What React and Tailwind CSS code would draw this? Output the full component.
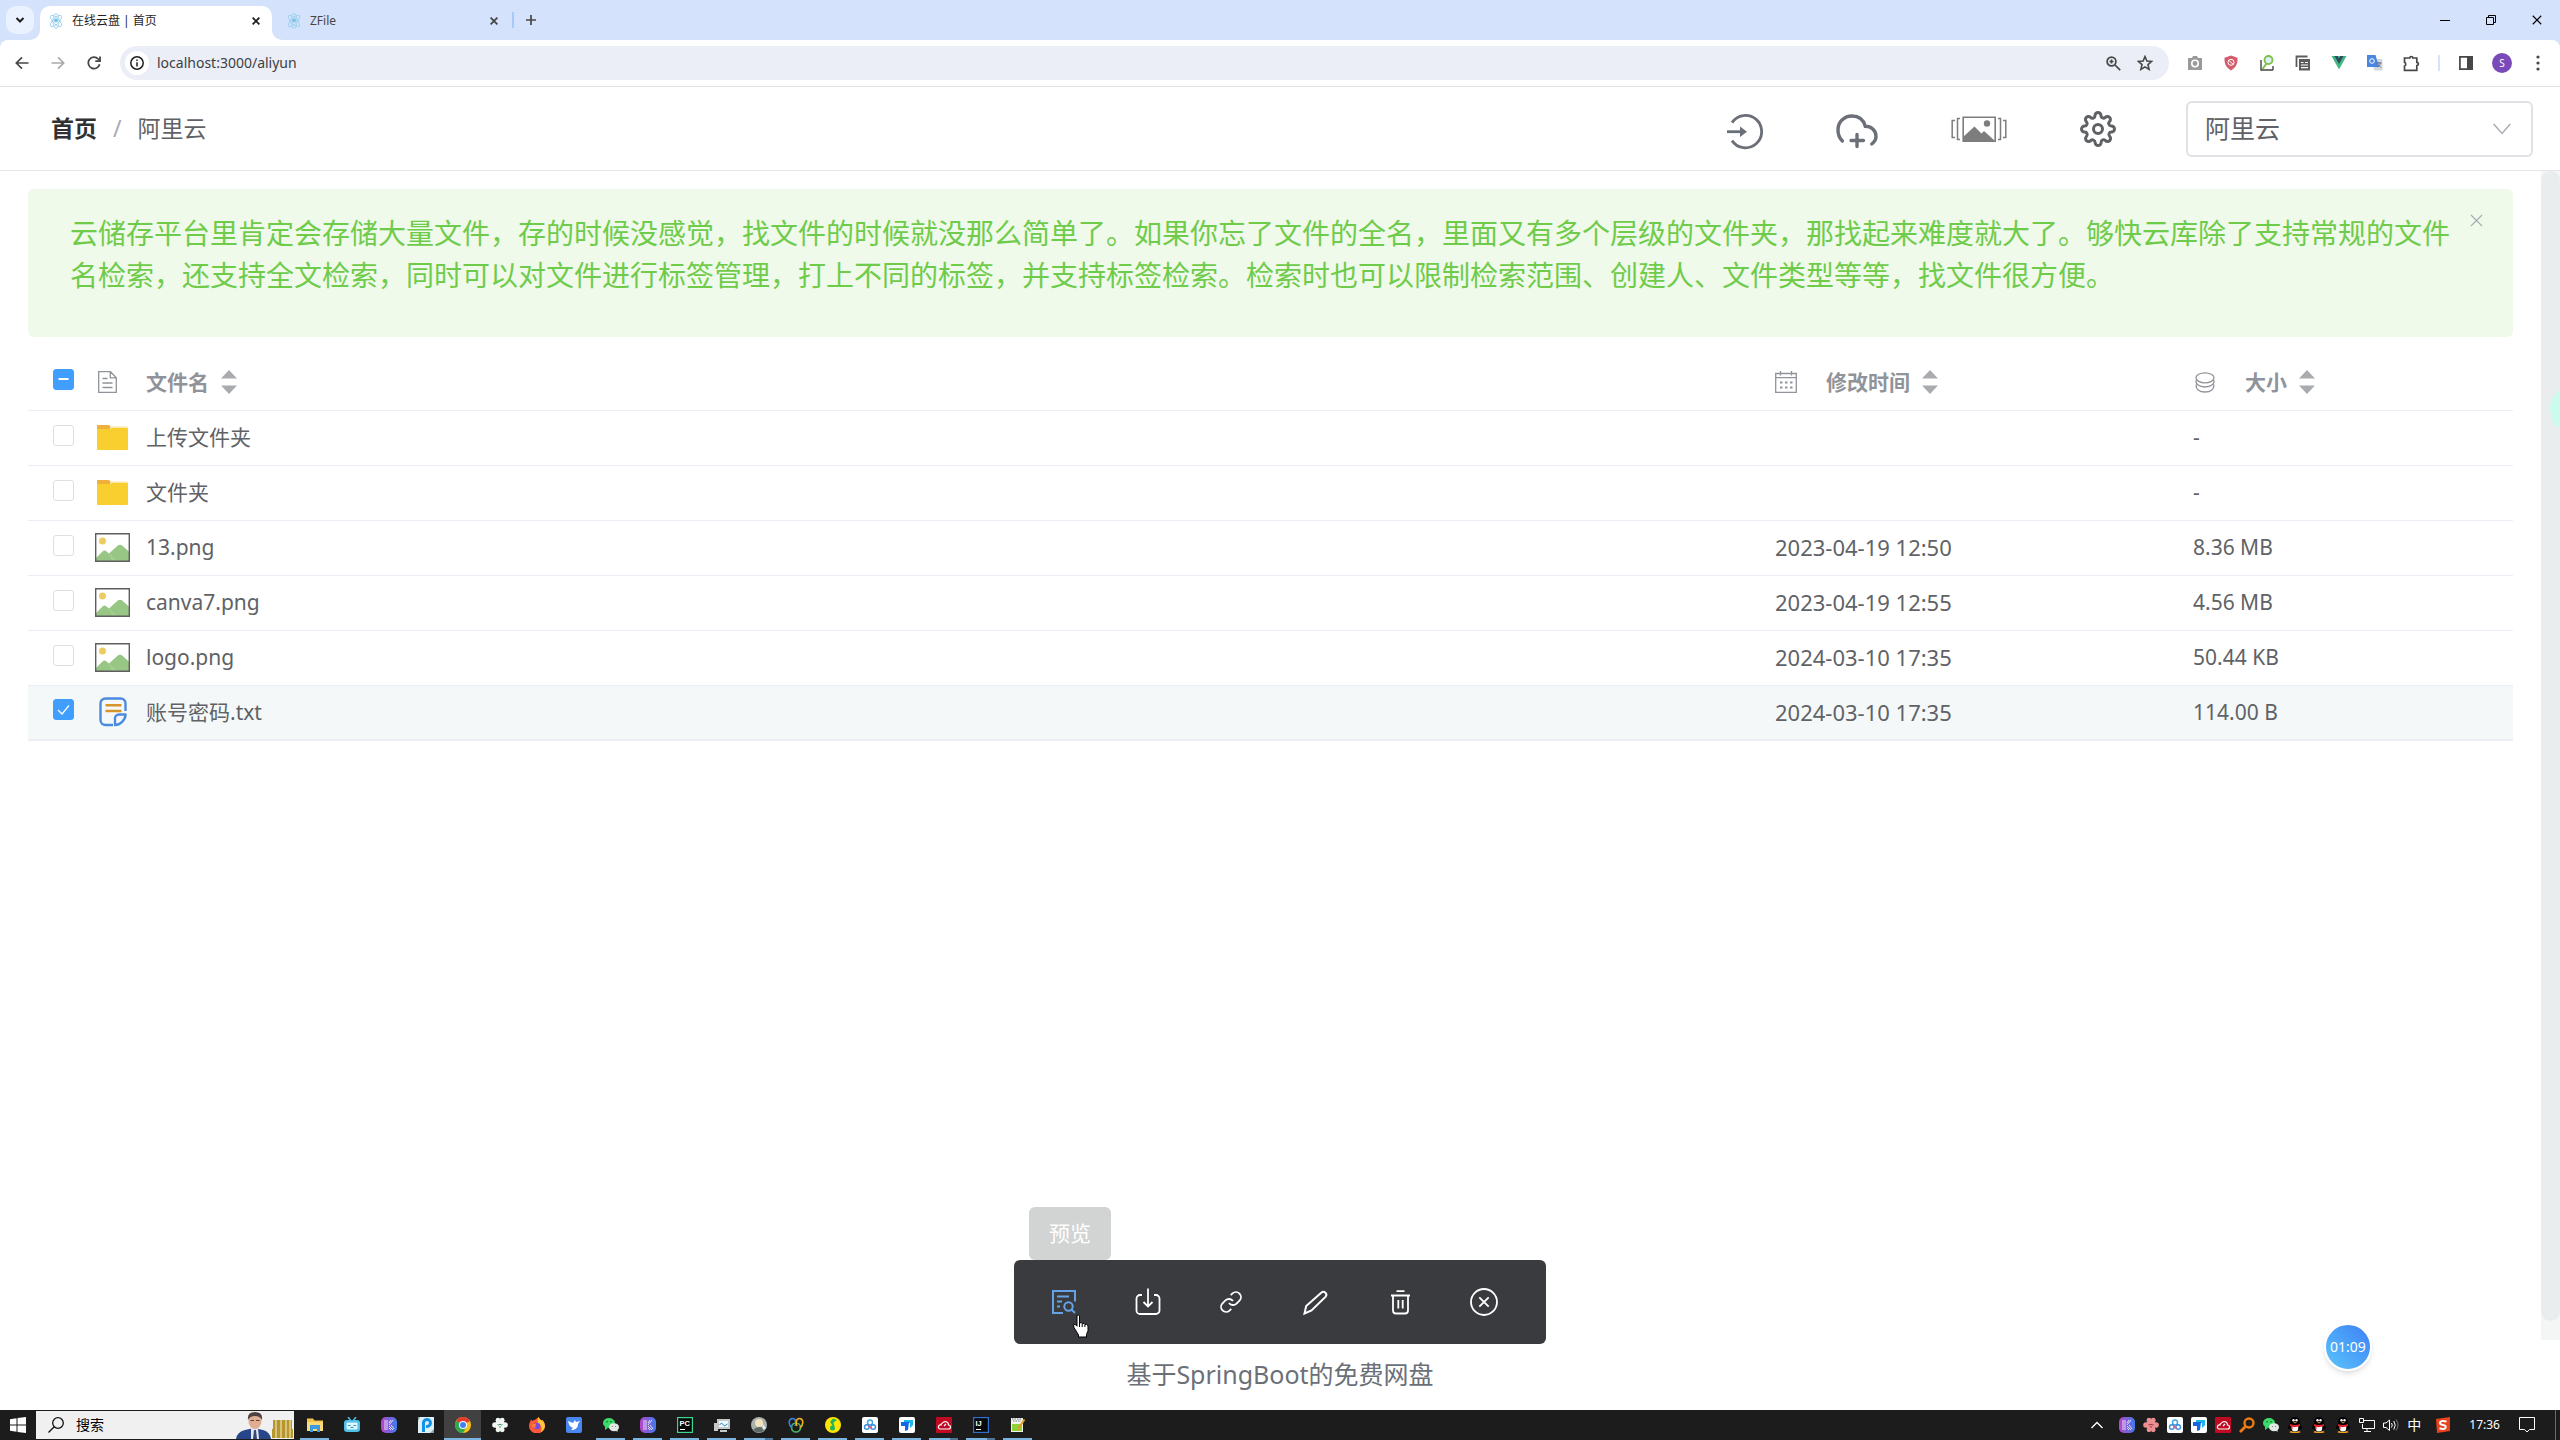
import { useState } from 'react';
import { FiSettings } from 'react-icons/fi';

const ALERT_TEXT =
  '云储存平台里肯定会存储大量文件，存的时候没感觉，找文件的时候就没那么简单了。如果你忘了文件的全名，里面又有多个层级的文件夹，那找起来难度就大了。够快云库除了支持常规的文件名检索，还支持全文检索，同时可以对文件进行标签管理，打上不同的标签，并支持标签检索。检索时也可以限制检索范围、创建人、文件类型等等，找文件很方便。';

const FILES = [
  { name: '上传文件夹', type: 'folder', time: '', size: '-' },
  { name: '文件夹', type: 'folder', time: '', size: '-' },
  { name: '13.png', type: 'image', time: '2023-04-19 12:50', size: '8.36 MB' },
  { name: 'canva7.png', type: 'image', time: '2023-04-19 12:55', size: '4.56 MB' },
  { name: 'logo.png', type: 'image', time: '2024-03-10 17:35', size: '50.44 KB' },
  { name: '账号密码.txt', type: 'text', time: '2024-03-10 17:35', size: '114.00 B' },
];

/* ---------- browser chrome ---------- */

const Favicon = () => (
  <svg width="16" height="16" viewBox="0 0 16 16" fill="none" stroke="#9bd0ee" strokeWidth=".9">
    <ellipse cx="8" cy="8" rx="7.500" ry="3" transform="rotate(45 8 8)" />
    <ellipse cx="8" cy="8" rx="7.500" ry="3" transform="rotate(-45 8 8)" />
    <ellipse cx="8" cy="8" rx="3" ry="7.500" />
    <circle cx="8" cy="7.500" r="2" fill="#7cc0e6" stroke="none" />
  </svg>
);

const CloseIcon = ({ size = 8, width = 1.8 }) => (
  <svg width={size} height={size} viewBox="0 0 8 8" stroke="currentColor" strokeWidth={width}>
    <path d="M.6.6l6.8 6.8M7.4.6L.6 7.4" />
  </svg>
);

const TabStrip = () => (
  <div className="flex h-10 items-end bg-[#d5e2fb] pl-[6px] text-xs text-[#1f1f1f]">
    <button aria-label="搜索标签页" className="mb-[6px] flex h-7 w-7 items-center justify-center rounded-[10px] bg-[#e9f2fe]">
      <svg width="10" height="10" viewBox="0 0 10 10" fill="none" stroke="currentColor" strokeWidth="2">
        <path d="M1.5 3l3.5 3.5L8.500 3" />
      </svg>
    </button>
    <div className="relative ml-[6px] flex h-[34px] w-[232px] items-center rounded-t-[10px] bg-white pl-2 pr-3 pb-1">
      <Favicon />
      <span className="ml-2">在线云盘 | 首页</span>
      <button aria-label="关闭标签页" className="ml-auto"><CloseIcon /></button>
      <svg className="absolute -left-[10px] bottom-0" width="10" height="10"><path d="M10 0v10H0A10 10 0 0 0 10 0z" fill="#fff" /></svg>
      <svg className="absolute -right-[10px] bottom-0" width="10" height="10"><path d="M0 0v10h10A10 10 0 0 1 0 0z" fill="#fff" /></svg>
    </div>
    <div className="flex h-[34px] w-[240px] items-center pl-[14px] pr-[14px] pb-1 text-[#454746]">
      <Favicon />
      <span className="ml-2">ZFile</span>
      <button aria-label="关闭标签页" className="ml-auto"><CloseIcon /></button>
    </div>
    <div className="mb-3 h-4 w-[2px] bg-[#a8c7fa]" />
    <button aria-label="新标签页" className="mb-[15px] ml-3 text-[#454746]">
      <svg width="10" height="10" viewBox="0 0 10 10" stroke="currentColor" strokeWidth="1.7"><path d="M5 0v10M0 5h10" /></svg>
    </button>
    <div className="mb-[15px] ml-auto flex items-center gap-9 pr-[18px] text-black">
      <button aria-label="最小化"><svg width="10" height="10" stroke="currentColor"><path d="M0 5.500h10" /></svg></button>
      <button aria-label="还原">
        <svg width="10" height="10" fill="none" stroke="currentColor"><path d="M.5 2.500h7v7h-7zM2.500 2.500v-2h7v7h-2" /></svg>
      </button>
      <button aria-label="关闭"><CloseIcon size={10} width={0.9} /></button>
    </div>
  </div>
);

const Toolbar = () => (
  <div className="bg-[#d5e2fb]">
    <div className="flex h-[47px] items-center rounded-t-lg border-b border-[#e0e2e6] bg-white pl-[15px] pr-[20px] text-[#474747]">
      <button aria-label="后退">
        <svg width="14" height="14" viewBox="0 0 14 14" fill="none" stroke="currentColor" strokeWidth="1.7"><path d="M13.500 7H1.500M7 1.300L1.300 7 7 12.700" /></svg>
      </button>
      <button aria-label="前进" className="ml-[22px] text-[#ababab]">
        <svg width="14" height="14" viewBox="0 0 14 14" fill="none" stroke="currentColor" strokeWidth="1.7"><path d="M.5 7h12M7 1.300L12.700 7 7 12.700" /></svg>
      </button>
      <button aria-label="重新加载" className="ml-[22px]">
        <svg width="14" height="14" viewBox="0 0 14 14" fill="none" stroke="currentColor" strokeWidth="1.800">
          <path d="M12.600 8.200A5.700 5.700 0 1 1 11.200 3L12.800 4.700" /><path d="M13 .5v4.700H8.300" />
        </svg>
      </button>
      <div className="ml-[19px] flex h-[34px] flex-1 items-center rounded-full bg-[#ebeef7] pl-[5px] pr-4">
        <button aria-label="网站信息" className="flex h-6 w-6 items-center justify-center rounded-full bg-white text-[#1f1f1f]">
          <svg width="14" height="14" viewBox="0 0 14 14" fill="none" stroke="currentColor" strokeWidth="1.500">
            <circle cx="7" cy="7" r="6.200" /><path d="M7 6.200v4.200M7 3.400v1.600" />
          </svg>
        </button>
        <input aria-label="地址" defaultValue="localhost:3000/aliyun" className="ml-2 flex-1 bg-transparent text-sm text-[#3c4043] outline-none" />
        <svg width="15" height="15" viewBox="0 0 15 15" fill="none" stroke="currentColor" strokeWidth="1.700">
          <circle cx="5.500" cy="5.500" r="4.400" /><path d="M9 9l5.200 5.200M5.500 3.500v4M3.500 5.500h4" />
        </svg>
        <svg className="ml-4" width="16" height="16" viewBox="0 0 16 16" fill="none" stroke="currentColor" strokeWidth="1.600">
          <path d="M8 1.500l1.900 4.500 4.800.4-3.700 3.200 1.100 4.800L8 11.900l-4.100 2.500L5 9.600 1.300 6.400l4.800-.4z" />
        </svg>
      </div>
      <div className="ml-[18px] flex items-center gap-5">
        <svg width="16" height="16" viewBox="0 0 16 16">
          <path d="M1 3h4l1-2h4l1 2h4v12H1z" fill="#9a9a9a" /><circle cx="8" cy="8.500" r="3.200" fill="none" stroke="#fff" strokeWidth="1.600" />
        </svg>
        <svg width="16" height="16" viewBox="0 0 16 16">
          <path d="M8 .5l6.500 2.300c.3 6-1.500 9.700-6.500 12.700C3 12.500 1.200 8.800 1.500 2.800z" fill="#d45d6d" />
          <circle cx="8" cy="7.300" r="3" fill="none" stroke="#fff" /><path d="M6 5.300l4 4" stroke="#fff" />
        </svg>
        <svg width="16" height="16" viewBox="0 0 16 16" fill="none">
          <path d="M2 5v10h12M14 11v4" stroke="#444" strokeWidth="1.400" />
          <circle cx="9.500" cy="5" r="4" fill="#dff0f4" stroke="#7cc04b" strokeWidth="1.800" /><path d="M7.500 8.500L3.500 14" stroke="#7cc04b" strokeWidth="2" />
        </svg>
        <svg width="16" height="16" viewBox="0 0 16 16">
          <path d="M1.500 12V1.500h11" fill="none" stroke="#5c5c5c" strokeWidth="1.800" /><path d="M4 4h11v11.500H4z" fill="#5c5c5c" />
          <path d="M6 7.500h2.500M10 7.500h3M6 10h7M6 12.700h7" stroke="#fff" strokeWidth="1.200" />
        </svg>
        <svg width="16" height="16" viewBox="0 0 16 16"><path d="M.5 1h15L8 14.500z" fill="#41b883" /><path d="M3.500 1h3L8 3.500 9.500 1h3L8 9z" fill="#2f495e" /></svg>
        <svg width="16" height="16" viewBox="0 0 16 16">
          <path d="M5 4h10.500v11.500H7z" fill="#d6d8dc" /><path d="M0 0h8.500l3.500 12H0z" fill="#4a86e0" />
          <circle cx="5" cy="6" r="2.300" fill="none" stroke="#fff" /><path d="M9.500 8h5M12 7v1M13.500 8c-.5 2-2 3.500-3 4M11 9.500l3 3" stroke="#5b6b88" fill="none" />
        </svg>
        <svg width="17" height="17" viewBox="0 0 17 17" fill="none" stroke="currentColor" strokeWidth="1.700">
          <path d="M1.500 3h5.300a1.500 1.500 0 0 1 3 0h4v4.300a1.600 1.600 0 0 1 0 3.200v4.800H1.500v-4.300a2 2 0 0 0 0-3.700z" />
        </svg>
      </div>
      <div className="ml-[18px] h-4 w-[2px] bg-[#d3e3fd]" />
      <svg className="ml-[19px]" width="14" height="14" viewBox="0 0 14 14"><path d="M.9.9h12.200v12.200H.9z" fill="none" stroke="#474747" strokeWidth="1.700" /><path d="M8 0h6v14H8z" fill="#474747" /></svg>
      <div className="ml-[19px] flex h-5 w-5 items-center justify-center rounded-full bg-[#7a4ab8] text-[10px] text-white">S</div>
      <button aria-label="菜单" className="ml-6">
        <svg width="4" height="16" viewBox="0 0 4 16" fill="currentColor"><circle cx="2" cy="2" r="1.600" /><circle cx="2" cy="8" r="1.600" /><circle cx="2" cy="14" r="1.600" /></svg>
      </button>
    </div>
  </div>
);

/* ---------- page header ---------- */

const LoginIcon = () => (
  <svg width="36" height="42" viewBox="0 0 36 42" fill="none" stroke="#6b6f77">
    <path d="M5 14.600A16.200 16.200 0 1 1 5 32.600" strokeWidth="2.800" />
    <path d="M0 23.700h14" strokeWidth="2.800" />
    <path d="M13 18.500l7 5.200-7 5.200z" fill="#6b6f77" stroke="none" />
  </svg>
);

const CloudIcon = () => (
  <svg width="42" height="42" viewBox="0 0 42 42" fill="none" stroke="#6b6f77" strokeWidth="3.400" strokeLinecap="round">
    <path d="M6.400 33A15.200 15.200 0 0 1 2 22C2 13.500 8.500 8 16 8c6.500 0 11.500 3.800 13.300 10.200C35 18.300 40 22 40 28.500c0 3-1.500 5.500-4.200 7.500" />
    <path d="M21 26.500v12M15 32.500h12.500" />
  </svg>
);

const GalleryIcon = () => (
  <svg width="56" height="30" viewBox="0 0 56 30" fill="none" stroke="#7d7d7d">
    <path d="M12.200 3.200h32v24h-32z" strokeWidth="1.600" />
    <path d="M12 28v-5l11.500-10.500 7 7 2.500-2.500 11 10v1z" fill="#7d7d7d" stroke="none" />
    <circle cx="36" cy="9.500" r="3.200" fill="#7d7d7d" stroke="none" />
    <path d="M9 4.500H6.500v21H9M47 4.500h2.500v21H47M4 6.500H1.200v17H4M52 6.500h2.800v17H52" strokeWidth="1.500" />
  </svg>
);

const PageHeader = () => (
  <header className="flex h-[84px] items-center border-b border-[#e3e5e6] bg-white pl-[51px] pr-[27px]">
    <nav className="flex items-center text-[23px] text-[#606266]">
      <a href="#home" className="font-bold text-[#303133]">首页</a>
      <span className="mx-4 text-[#a8abb2]">/</span>
      <a href="#aliyun">阿里云</a>
    </nav>
    <div className="ml-auto flex items-center gap-[73px]">
      <button aria-label="登录"><LoginIcon /></button>
      <button aria-label="上传"><CloudIcon /></button>
      <button aria-label="图库"><GalleryIcon /></button>
      <button aria-label="设置"><FiSettings size={36} strokeWidth={2} className="text-[#5f6264]" /></button>
    </div>
    <div className="relative ml-[70px] w-[347px]">
      <select aria-label="存储源" className="h-14 w-full appearance-none rounded-md border-2 border-[#dfe1e5] bg-white pl-[17px] text-[25px] text-[#606266]">
        <option>阿里云</option>
      </select>
      <svg className="pointer-events-none absolute right-[22px] top-[22px]" width="18" height="12" viewBox="0 0 18 12" fill="none" stroke="#a8abb2" strokeWidth="1.400">
        <path d="M.7 1L9 10.500 17.300 1" />
      </svg>
    </div>
  </header>
);

/* ---------- file list ---------- */

const Checkbox = ({ label, checked, partial, onChange }) => (
  <label className="relative block h-[21px] w-[21px]">
    <input
      type="checkbox"
      aria-label={label}
      checked={checked}
      onChange={onChange}
      className={`block h-[21px] w-[21px] appearance-none rounded-[3px] border ${checked || partial ? 'border-[#409eff] bg-[#409eff]' : 'border-[#dcdfe6] bg-white'}`}
    />
    <svg className="pointer-events-none absolute inset-0" width="21" height="21" fill="none" stroke="#fff">
      {partial && <path d="M5.500 10h10" strokeWidth="2" />}
      {checked && !partial && <path d="M5 11l4 4 7-8.500" strokeWidth="1.200" />}
    </svg>
  </label>
);

const FileIcon = ({ type }) => {
  if (type === 'folder') {
    return (
      <svg width="31" height="25" viewBox="0 0 31 25">
        <path d="M0 0h12l2 2v6H0z" fill="#f0b03c" />
        <path d="M13 1.500h17.500V5H13z" fill="#fbe6a6" />
        <path d="M0 4h13l2-1h16v21a1 1 0 0 1-1 1H1a1 1 0 0 1-1-1z" fill="#f8cf2e" />
      </svg>
    );
  }
  if (type === 'image') {
    return (
      <svg width="35" height="29" viewBox="0 0 35 29">
        <path d="M.7.7h33.600v27.600H.7z" fill="#fff" />
        <circle cx="7.500" cy="8" r="3.500" fill="#ebcb62" />
        <path d="M1 25l6.500-6.500q2-1.800 4 0L14 20.500l8.500-7.700q2.500-2 5 0L34.300 19v9H1z" fill="#97c685" />
        <path d="M13.500 21l8 7M16 25l3 3" stroke="#b5d8a8" strokeWidth=".8" />
        <path d="M.7.7h33.600v27.600H.7z" fill="none" stroke="#5f5f5f" strokeWidth="1.400" />
      </svg>
    );
  }
  return (
    <svg width="28" height="30" viewBox="0 0 28 30" fill="none" stroke="#4a8be0" strokeWidth="2.400">
      <path d="M14 28H6.500a5 5 0 0 1-5-5V6.500a5 5 0 0 1 5-5h15a5 5 0 0 1 5 5V14" />
      <path d="M26.500 17.500h-6.500a4 4 0 0 0-4 4V28c5 0 10.500-5 10.500-10.500z" strokeLinejoin="round" />
      <path d="M6.500 8.200h16M6.500 14h16" stroke="#d69429" strokeWidth="2.600" />
    </svg>
  );
};

const SortCaret = () => (
  <svg className="ml-3" width="16" height="24" viewBox="0 0 16 24" fill="#a9abae">
    <path d="M8 0l8 8.500H0zM8 24l8-8.500H0z" />
  </svg>
);

const DocIcon = () => (
  <svg width="19" height="22" viewBox="0 0 19 22" fill="none" stroke="#909399" strokeWidth="1.300">
    <path d="M.7.7h11.800l5.800 6v14.600H.7zM12.300.7v6.200h6M4.500 7.500h5M4.500 12h10M4.500 16.500h10" />
  </svg>
);

const CalendarIcon = () => (
  <svg width="22" height="22" viewBox="0 0 22 22" fill="none" stroke="#909399" strokeWidth="1.300">
    <path d="M.7 2.500h20.600v18.800H.7zM.7 6.700h20.600M5.500 0v4.500M16.500 0v4.500" />
    <path d="M5 11.500h12.500M5 16.500h12.500" strokeWidth="1.800" strokeDasharray="2.500 2.500" />
  </svg>
);

const CoinsIcon = () => (
  <svg width="20" height="21" viewBox="0 0 20 21" fill="none" stroke="#909399" strokeWidth="1.300">
    <ellipse cx="10" cy="5.800" rx="9" ry="5" />
    <path d="M1.500 8C-.5 11.500 4 15 10 15s10.500-3.500 8.500-7M1.500 12.500c-1.500 4.500 3 7.500 8.500 7.500s10-3 8.500-7.500" />
  </svg>
);

const FileTable = () => {
  const [selected, setSelected] = useState(['账号密码.txt']);
  const toggle = (name) =>
    setSelected((s) => (s.includes(name) ? s.filter((n) => n !== name) : [...s, name]));
  const all = selected.length === FILES.length;

  return (
    <table className="mt-[18px] w-full table-fixed border-collapse text-left text-[21px] text-[#606266]">
      <thead className="text-[#909399]">
        <tr className="h-[55px] border-b border-[#ebeef5]">
          <th className="w-[67px] pb-[5px] pl-[25px]">
            <Checkbox label="全选" checked={all} partial={selected.length > 0 && !all} onChange={() => setSelected(all ? [] : FILES.map((f) => f.name))} />
          </th>
          <th>
            <div className="flex items-center">
              <span className="mr-4 w-[35px] pl-[3px]"><DocIcon /></span>文件名<SortCaret />
            </div>
          </th>
          <th className="w-[418px]">
            <div className="flex items-center"><span className="mr-[29px]"><CalendarIcon /></span>修改时间<SortCaret /></div>
          </th>
          <th className="w-[320px]">
            <div className="flex items-center"><span className="ml-[2px] mr-[30px]"><CoinsIcon /></span>大小<SortCaret /></div>
          </th>
        </tr>
      </thead>
      <tbody>
        {FILES.map((f) => (
          <tr key={f.name} className={`h-[55px] border-b border-[#ebeef5] last:border-b-2 ${selected.includes(f.name) ? 'bg-[#f4f8f9]' : ''}`}>
            <td className="pb-[5px] pl-[25px]"><Checkbox label={f.name} checked={selected.includes(f.name)} onChange={() => toggle(f.name)} /></td>
            <td>
              <div className="flex items-center">
                <span className="mr-4 flex w-[35px] justify-center"><FileIcon type={f.type} /></span>{f.name}
              </div>
            </td>
            <td className="text-[22px]">{f.time}</td>
            <td>{f.size}</td>
          </tr>
        ))}
      </tbody>
    </table>
  );
};

/* ---------- floating action bar ---------- */

const ACTIONS = [
  {
    label: '预览',
    icon: (
      <g stroke="#66a3e6" strokeWidth="2">
        <path d="M13 25H3V3h22v10.500M7 8.500h12M7 13.500h5M7 18.500h3" /><circle cx="18.500" cy="18.500" r="4.200" /><path d="M21.500 21.500l3.500 3.500" />
      </g>
    ),
  },
  { label: '下载', icon: <path d="M8 7H6a3.500 3.500 0 0 0-3.500 3.500v12A3.500 3.500 0 0 0 6 26h16a3.500 3.500 0 0 0 3.500-3.500v-12A3.500 3.500 0 0 0 22 7h-2M14 .5V18M9.500 14l4.500 4.500 4.500-4.500" /> },
  {
    label: '复制链接',
    icon: (
      <g transform="translate(1 2)">
        <path d="M10 13a5 5 0 0 0 7.540.54l3-3a5 5 0 0 0-7.070-7.070l-1.720 1.710" />
        <path d="M14 11a5 5 0 0 0-7.540-.54l-3 3a5 5 0 0 0 7.070 7.070l1.710-1.710" />
      </g>
    ),
  },
  { label: '重命名', icon: <path d="M2.500 25.500l1.700-7.500L19.500 4.500a3 3 0 0 1 4.200 4.200L9.500 22.500z" strokeWidth="2" /> },
  { label: '删除', icon: <path d="M10.500 3.200h8M5 7.500h19M7 7.500v15a3 3 0 0 0 3 3h9a3 3 0 0 0 3-3v-15M12.300 12v8.500M16.700 12v8.500" /> },
  { label: '取消', icon: <><circle cx="14" cy="14" r="13" /><path d="M9.300 9.300l9.400 9.400M18.700 9.300l-9.400 9.400" /></> },
];

const ActionBar = () => (
  <div className="absolute bottom-[66px] left-1/2 flex h-[84px] w-[532px] -translate-x-1/2 items-center rounded-md bg-[#3a3b3f] pl-2 pr-5">
    <div role="tooltip" className="absolute bottom-full left-[15px] flex h-[53px] items-center rounded-md bg-[#d2d3d3] px-5 text-[21px] text-white">预览</div>
    {ACTIONS.map(({ label, icon }) => (
      <button key={label} aria-label={label} className="flex flex-1 justify-center">
        <svg width="28" height="28" viewBox="0 0 28 28" fill="none" stroke="#fff" strokeWidth="1.800">{icon}</svg>
      </button>
    ))}
    {/* hand cursor */}
    <svg className="absolute left-[58px] top-[54px]" width="18" height="24" viewBox="0 0 18 24">
      <path d="M5 1.500q1.300-1 2.500.2V9l1.800-.3.900.9 1.700-.2 1 1 1.600-.1 1.500 1.600v5l-1.500 3.500V23H6.500v-2L2 13.500l-.5-2.500 1.500-.8 2 2z" fill="#fff" stroke="#000" />
      <path d="M7.500 9v4M10.200 9.800V13M12.900 10.500V13" stroke="#000" />
    </svg>
  </div>
);

/* ---------- taskbar ---------- */

const SmallIcon = ({ children }) => <svg width="16" height="16" viewBox="0 0 16 16" fill="none">{children}</svg>;

const KIcon = () => (
  <SmallIcon>
    <defs><linearGradient id="kgrad" x1="0" y1="0" x2="1" y2="0"><stop stopColor="#b845cc" /><stop offset="1" stopColor="#3f7bea" /></linearGradient></defs>
    <rect width="16" height="16" rx="5" fill="url(#kgrad)" />
    <path d="M4 3v10M6 3v10M8 9l4 4M8 11l2 2M8 8l4-5M8 6l2-3M10 8l3 4" stroke="#fff" strokeWidth=".8" />
  </SmallIcon>
);
const WechatIcon = () => (
  <SmallIcon>
    <ellipse cx="6" cy="6" rx="6" ry="5" fill="#3ddb6a" /><path d="M2 9v4l3-2z" fill="#3ddb6a" />
    <circle cx="4" cy="4.800" r=".8" fill="#155a2a" /><circle cx="8" cy="4.800" r=".8" fill="#155a2a" />
    <ellipse cx="11" cy="10.200" rx="5" ry="4" fill="#e4e8e5" /><path d="M12 13l2.500 2V12z" fill="#e4e8e5" />
    <circle cx="9.500" cy="9.500" r=".6" fill="#777" /><circle cx="12.500" cy="9.500" r=".6" fill="#777" />
  </SmallIcon>
);
const NetdiskIcon = () => (
  <SmallIcon>
    <rect width="16" height="16" rx="2" fill="#fff" />
    <circle cx="8" cy="5.500" r="2.500" stroke="#3aa5e8" strokeWidth="1.400" /><circle cx="4.800" cy="10" r="2.300" stroke="#3a8fe0" strokeWidth="1.400" /><circle cx="11.200" cy="10" r="2.300" stroke="#3a8fe0" strokeWidth="1.400" />
    <path d="M6.500 8.500l3 3" stroke="#e8566d" strokeWidth="1.600" />
  </SmallIcon>
);
const TodeskIcon = () => (
  <SmallIcon><rect width="16" height="16" rx="2" fill="#fff" /><path d="M5 3h9v5l-3 3V6H5z" fill="#19b8e8" /><path d="M2 5h8l-1 8-3 1V9H2z" fill="#1267e8" /></SmallIcon>
);
const RedCloudIcon = () => (
  <SmallIcon><rect width="16" height="16" rx="1" fill="#c00a22" /><path d="M4 12h8.500a2 2 0 0 0 0-4 3.300 3.300 0 0 0-6-2A2 2 0 0 0 5 8a2 2 0 0 0-1 4zM8 9l2-2" stroke="#fff" strokeWidth="1.200" /></SmallIcon>
);
const PenguinIcon = () => (
  <SmallIcon>
    <ellipse cx="8" cy="15" rx="5.500" ry="1" fill="#f5a623" />
    <path d="M8 0c3.500 0 4.800 2.500 4.800 5.500L15 11l-1 1.500L12.500 11Q12 15 8 15t-4.500-4L2 12.500 1 11l2.200-5.500C3.200 2.500 4.500 0 8 0z" fill="#000" />
    <path d="M4.800 9h6.400q.8 5.500-3.200 5.500T4.800 9z" fill="#fff" />
    <circle cx="6.500" cy="3.200" r="1.200" fill="#fff" /><circle cx="9.500" cy="3.200" r="1.200" fill="#fff" />
    <path d="M6 5.200h4l-2 1.300z" fill="#f5a623" />
    <path d="M3 7q5 2 10 0v2q-5 1.800-7.500.8v2.500H4V9.300L3 9z" fill="#e0212c" />
  </SmallIcon>
);
const FlowerIcon = ({ color, center }) => (
  <SmallIcon>
    <g fill={color}><circle cx="6" cy="3.200" r="2.400" /><circle cx="10.200" cy="3.200" r="2.400" /><circle cx="6" cy="12.800" r="2.400" /><circle cx="10.200" cy="12.800" r="2.400" /><circle cx="3" cy="8" r="2.800" /><circle cx="13" cy="8" r="2.800" /><circle cx="8" cy="8" r="5" /></g>
    <path d="M5.500 7q1 2.500 2.500 0 1.500 2.500 2.500 0M8 9v2" stroke={center} strokeWidth=".9" />
  </SmallIcon>
);
const IdeIcon = ({ text, border }) => (
  <SmallIcon>
    <rect x=".6" y=".6" width="14.800" height="14.800" fill="#080808" stroke={border} strokeWidth="1.200" />
    <text x="2.500" y="8.800" fontSize="7.500" fontWeight="bold" fill="#fff" fontFamily="Liberation Sans, sans-serif">{text}</text>
    <path d="M3 12.500h5" stroke="#fff" />
  </SmallIcon>
);

const APPS = [
  { name: '文件资源管理器', open: true, icon: <SmallIcon><path d="M0 1.500h6l1.500 2H16V14H0z" fill="#f6c445" /><path d="M0 5h16v9H0z" fill="#fbd978" /><path d="M3 8h10v7h-3v-3H6v3H3z" fill="#3c9bdc" /></SmallIcon> },
  { name: '哔哩哔哩', icon: <SmallIcon><path d="M4 0l2.500 3M12 0L9.500 3" stroke="#4fc0e8" strokeWidth="1.500" /><rect y="3" width="16" height="12" rx="3" fill="#4fc0e8" /><rect x="2.500" y="5.500" width="11" height="7" rx="1" fill="#dff5fc" /><path d="M4 8.500h2.500M9.500 8.500H12M6.500 10.500h3" stroke="#2796c4" /></SmallIcon> },
  { name: 'K', icon: <KIcon /> },
  { name: 'P', icon: <SmallIcon><rect width="16" height="16" fill="#8ca0a4" /><path d="M2 0h14v12l-4 4H0V4z" fill="#dff1f8" /><path d="M5.500 15V5.500a3.500 3.500 0 1 1 3.500 4H8" stroke="#1192e8" strokeWidth="3" /></SmallIcon> },
  {
    name: 'Chrome', open: true, active: true,
    icon: <SmallIcon><circle cx="8" cy="8" r="8" fill="#fbc116" /><path d="M8 8L1.070 4A8 8 0 0 1 14.930 4z" fill="#e33b2e" /><path d="M8 8L1.070 4A8 8 0 0 0 8 16l3.500-6z" fill="#2da94f" /><circle cx="8" cy="8" r="4" fill="#fff" /><circle cx="8" cy="8" r="3" fill="#3f82f1" /></SmallIcon>,
  },
  { name: '花', icon: <FlowerIcon color="#f2f7f4" center="#2f8c5c" /> },
  {
    name: 'Firefox',
    icon: <SmallIcon><path d="M1 5l1-2.500L3.500 4Q5 2.500 6.500 2.500L9.500 0q1 2.500 3 3.500L13.500 3Q16 6 16 9a8 7.500 0 0 1-16 0q0-2.500 1-4z" fill="#ff5a36" /><path d="M9.500 0q1 2.500 3 3.500L13.500 3Q16 6 16 9q-.5 4-4 6 2-6-3-9-1-3 .5-6z" fill="#ffc83a" /><circle cx="8" cy="9" r="3.300" fill="#7a4be0" /><path d="M3 8q2-2 4.500-1-2 1.500-.5 3.500-3 .5-4-2.500z" fill="#ff8a2b" /></SmallIcon>,
  },
  { name: '飞鸟', icon: <SmallIcon><rect width="16" height="16" rx="2" fill="#4a86f0" /><path d="M2 4l5 2 2-3 1 2 4-1-2 3c0 4-3 6-7 6l2-2C4 10 3 8 2 4z" fill="#fff" /></SmallIcon> },
  { name: '微信', open: true, icon: <WechatIcon /> },
  { name: 'K2', open: true, icon: <KIcon /> },
  { name: 'PyCharm', open: true, icon: <IdeIcon text="PC" border="#3ed693" /> },
  { name: '监视器', open: true, icon: <SmallIcon><path d="M0 6h4v8H0z" fill="#c9c9c9" /><path d="M3 2h13v10H3zM6 13h7v2H6z" fill="#c3c8c8" /><path d="M5 4h9v6H5z" fill="#e9fbff" /><path d="M5.500 8l2-2 3 3 3-2" stroke="#2a7fb0" /></SmallIcon> },
  { name: '头像', open: true, multi: true, icon: <SmallIcon><circle cx="8" cy="8" r="8" fill="#a9b0ae" /><circle cx="8" cy="6" r="4" fill="#f2e2bc" /><path d="M2 13q6-6 12 0-6 5-12 0z" fill="#5e6a66" /><path d="M11 6l4 5-3 2z" fill="#eceff0" /></SmallIcon> },
  { name: 'Navicat', open: true, icon: <SmallIcon><circle cx="8" cy="10.500" r="4.500" stroke="#47b86b" strokeWidth="1.600" /><path d="M4 11C-.5 7 1 1.500 4.500 1.500S8.500 6 7 9" stroke="#3d7fe8" strokeWidth="1.600" /><path d="M12 11c4.500-4 3-9.500-.5-9.500S7.500 6 9 9" stroke="#f2b01e" strokeWidth="1.600" /></SmallIcon> },
  { name: 'QQ音乐', open: true, icon: <SmallIcon><circle cx="8" cy="8" r="8" fill="#ffe600" /><path d="M8 1.500l4 1.500-3.500 2.500L10 11a2.500 2.500 0 1 1-2.500-2.500L5 5z" fill="#1fb562" /></SmallIcon> },
  { name: '百度网盘', open: true, icon: <NetdiskIcon /> },
  { name: 'ToDesk', open: true, icon: <TodeskIcon /> },
  { name: '红云', open: true, multi: true, icon: <RedCloudIcon /> },
  { name: 'IntelliJ IDEA', open: true, multi: true, icon: <IdeIcon text="IJ" border="#2e6fd0" /> },
  { name: 'Notepad++', open: true, icon: <SmallIcon><path d="M1 1h12v14H1z" fill="#f3f3ee" /><path d="M2 7h10v7H2z" fill="#8fd13a" /><path d="M2 2h10M3 4h8" stroke="#777" strokeDasharray="1.500 1" /><path d="M14.500 2.500L9 10.500 8 13" stroke="#e0a020" strokeWidth="2" /></SmallIcon> },
];

const TRAY = [
  <KIcon key="k" />,
  <FlowerIcon key="flower" color="#eb8f92" center="#8c2f38" />,
  <NetdiskIcon key="netdisk" />,
  <TodeskIcon key="todesk" />,
  <RedCloudIcon key="red" />,
  <SmallIcon key="search"><circle cx="10" cy="6" r="4.500" stroke="#ee7a12" strokeWidth="2.400" /><path d="M6.500 9.500L1 15" stroke="#ee7a12" strokeWidth="2.800" /></SmallIcon>,
  <WechatIcon key="wechat" />,
  <PenguinIcon key="qq1" />,
  <PenguinIcon key="qq2" />,
  <PenguinIcon key="qq3" />,
  <SmallIcon key="network"><path d="M5 3.500h10.500v8H3.500V7M8 12v2.500M5 14.500h7M.5 1.500h4v4h-4z" stroke="#fff" /></SmallIcon>,
  <SmallIcon key="volume"><path d="M.5 6v4.500H3l3.500 3V3L3 6z" stroke="#fff" /><path d="M8.500 6q1.500 2.200 0 4.500M10.800 4q2.800 4.200 0 8.500" stroke="#fff" /><path d="M13 2.500q4 5.700 0 11" stroke="#777" /></SmallIcon>,
];

const Taskbar = () => (
  <footer className="flex h-[30px] items-center bg-[#1c1c1c] text-white">
    <button aria-label="开始" className="flex w-9 justify-center">
      <svg width="16" height="16" viewBox="0 0 16 16" fill="#fff"><path d="M0 2.200L6.500 1.300v6.200H0zM7.500 1.100L16 0v7.500H7.500zM0 8.500h6.500v6.200L0 13.800zM7.500 8.500H16V16l-8.500-1.100z" /></svg>
    </button>
    <label className="relative flex h-7 w-[258px] items-center bg-[#f0f0f0] pl-3 text-black">
      <svg width="16" height="16" viewBox="0 0 16 16" fill="none" stroke="#111" strokeWidth="1.300"><circle cx="10" cy="6" r="5.300" /><path d="M6.200 9.800L.5 15.500" /></svg>
      <input aria-label="搜索" placeholder="搜索" className="ml-3 w-24 bg-transparent text-sm outline-none placeholder:text-black" />
      <svg className="ml-auto" width="58" height="28" viewBox="0 0 58 28">
        <path d="M0 28q1-7 9-9l9-2 9 2q7 2 8 9z" fill="#27468a" /><path d="M15 17h7l1 11h-8z" fill="#e3e9f2" /><path d="M18 19h2l1 9h-4z" fill="#3a4a6e" />
        <ellipse cx="19" cy="10" rx="6.500" ry="8" fill="#dfae92" /><path d="M12 9q-1-8 7-8t7 8q-2-4-7-4t-7 4z" fill="#4b4340" />
        <path d="M14.500 9.500h3.500M20 9.500h3.500" stroke="#5a4238" strokeWidth="1" />
        <path d="M37 9h19v9H37zM36 18h21v9H36z" fill="#b8962e" /><path d="M40 9v18M45 9v18M50 9v18M54 9v18" stroke="#e2d296" strokeWidth="1.500" />
      </svg>
    </label>
    <div className="ml-[2px] flex h-full">
      {APPS.map((app) => (
        <button key={app.name} aria-label={app.name} className={`relative flex h-full w-[37px] items-center justify-center ${app.active ? 'bg-[#414141]' : ''}`}>
          {app.icon}
          {app.open && <span className={`absolute bottom-0 h-[2px] bg-[#7ab4e0] ${app.active ? 'inset-x-0' : 'inset-x-1'}`} />}
          {app.multi && <span className="absolute bottom-0 right-1 h-[2px] w-2 bg-[#4f7696]" />}
        </button>
      ))}
    </div>
    <div className="ml-auto flex items-center gap-2">
      <button aria-label="显示隐藏的图标" className="mr-2">
        <svg width="12" height="8" viewBox="0 0 12 8" fill="none" stroke="#fff" strokeWidth="1.300"><path d="M.5 7L6 1.500 11.500 7" /></svg>
      </button>
      {TRAY}
      <span className="text-sm leading-none">中</span>
    </div>
    <div className="ml-[14px] flex h-full items-center">
      <SmallIcon><path d="M1 2L15 0v14L2 16z" fill="#e8431c" /><path d="M11.500 4.500Q5 3 5 6q0 1.500 3 2 3.500.5 2.500 2.800-1.500 2-6 .5" stroke="#fff" strokeWidth="2" /></SmallIcon>
      <time className="ml-[18px] text-xs">17:36</time>
      <button aria-label="通知" className="ml-[19px]">
        <svg width="16" height="16" viewBox="0 0 16 16" fill="none" stroke="#fff"><path d="M.5.5h15v12h-5L8 15l-2.500-2.500h-5z" /></svg>
      </button>
      <span className="ml-5 mr-1 h-full w-px bg-[#6a6a6a]" />
    </div>
  </footer>
);

const App = () => (
  <div className="flex min-h-screen flex-col bg-white font-['Noto_Sans','Noto_Sans_CJK_SC',sans-serif]">
    <TabStrip />
    <Toolbar />
    <PageHeader />
    <div className="relative flex flex-1 flex-col overflow-hidden">
      <div className="flex flex-1">
        <main className="flex-1 pl-7 pr-7 pt-[18px]">
          <div role="alert" className="relative rounded-md bg-[#effaea] pb-[41px] pl-[42px] pr-[58px] pt-[23px] text-[28px] leading-[42px] text-[#6fcb4a]">
            <p>{ALERT_TEXT}</p>
            <button aria-label="关闭提示" className="absolute right-[30px] top-[25px] leading-none text-[#a8abb2]">
              <CloseIcon size={13} width={0.7} />
            </button>
          </div>
          <FileTable />
        </main>
        <div className="w-[19px] bg-[#f4f5f5] pb-[19px]">
          <div className="h-full rounded-full bg-[#e9edee]" />
        </div>
      </div>
      <p className="flex h-[70px] items-center justify-center text-[25px] text-[#6b7078]">基于SpringBoot的免费网盘</p>
      <div className="absolute -right-[38px] top-[214px] h-12 w-12 rounded-full bg-[#cbfbec]" />
      <ActionBar />
      <div className="absolute bottom-[39px] right-[188px] flex h-12 w-12 items-center justify-center rounded-full border-2 border-white bg-linear-to-tr from-[#5cc4fa] to-[#3f7ff5] text-sm text-white shadow-md">
        01:09
      </div>
    </div>
    <Taskbar />
  </div>
);

export default App;
